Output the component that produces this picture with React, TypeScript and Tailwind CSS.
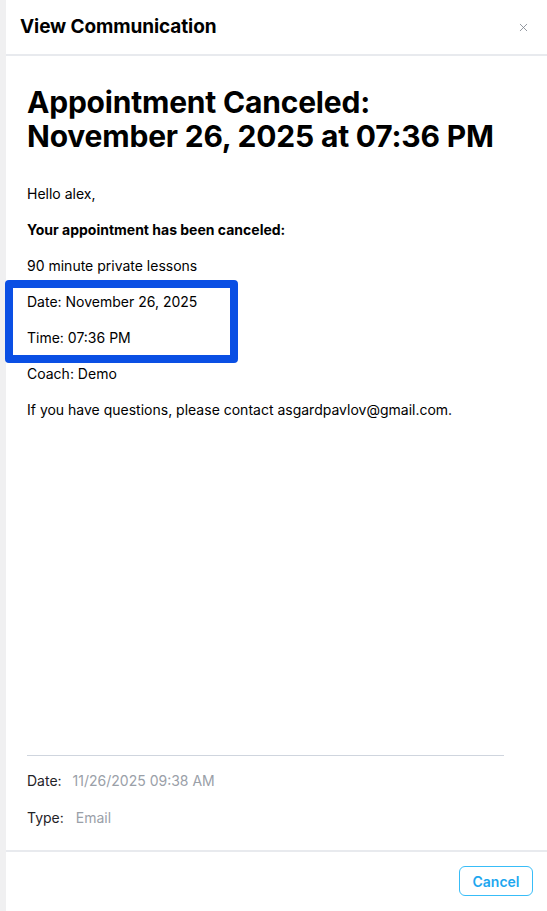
import { X } from "lucide-react";

const lines = [
  { text: "Hello alex,", bold: false },
  { text: "Your appointment has been canceled:", bold: true },
  { text: "90 minute private lessons", bold: false },
  { text: "Date: November 26, 2025", bold: false },
  { text: "Time: 07:36 PM", bold: false },
  { text: "Coach: Demo", bold: false },
  { text: "If you have questions, please contact asgardpavlov@gmail.com.", bold: false },
];

export default function App() {
  return (
    <div className="flex h-[911px] w-[547px] overflow-hidden bg-white font-['Inter','Liberation_Sans',sans-serif] text-black">
      {/* backdrop sliver on the left */}
      <div className="w-[6px] shrink-0 bg-[#f0f0f1]" />

      <div className="flex min-w-0 flex-1 flex-col">
        <header className="flex h-[56px] shrink-0 items-center justify-between border-b-2 border-[#e8eaee] pl-[14px] pr-[17px]">
          <h1 className="text-[19px] font-bold tracking-[-0.1px]">View Communication</h1>
          <X className="h-[13px] w-[13px] text-[#7d838c]" strokeWidth={1.5} />
        </header>

        <main className="flex flex-1 flex-col px-[21px] pt-[29px]">
          <h2 className="text-[30px] font-bold leading-[34px] tracking-[-0.2px]">
            Appointment Canceled:
            <br />
            November 26, 2025 at 07:36 PM
          </h2>

          <div className="relative mt-[31px] flex flex-col gap-[16px] text-[14px] leading-[20px]">
            {lines.map((l) => (
              <p key={l.text} className={l.bold ? "font-bold" : ""}>
                {l.text}
              </p>
            ))}
            {/* highlight annotation */}
            <div className="absolute left-[-22px] top-[96px] h-[83px] w-[233px] rounded-[4px] border-[8px] border-[#0a4fe4]" />
          </div>

          <div className="mr-[22px] mt-auto border-t border-[#cfd5de] pb-[22px] pt-[15px] text-[14px] leading-[20px]">
            <div className="flex">
              <span className="mr-[11px] text-[#1f2328]">Date:</span>
              <span className="text-[#9aa0a8]">11/26/2025 09:38 AM</span>
            </div>
            <div className="mt-[17px] flex">
              <span className="mr-[12px] text-[#1f2328]">Type:</span>
              <span className="text-[#9aa0a8]">Email</span>
            </div>
          </div>
        </main>

        <footer className="flex h-[61px] shrink-0 items-start justify-end border-t-2 border-[#e8eaee] pr-[14px] pt-[14px]">
          <button className="h-[30px] w-[74px] rounded-[6px] border border-[#38bdf8] text-[14px] font-semibold text-[#1ea7ef]">
            Cancel
          </button>
        </footer>
      </div>
    </div>
  );
}
